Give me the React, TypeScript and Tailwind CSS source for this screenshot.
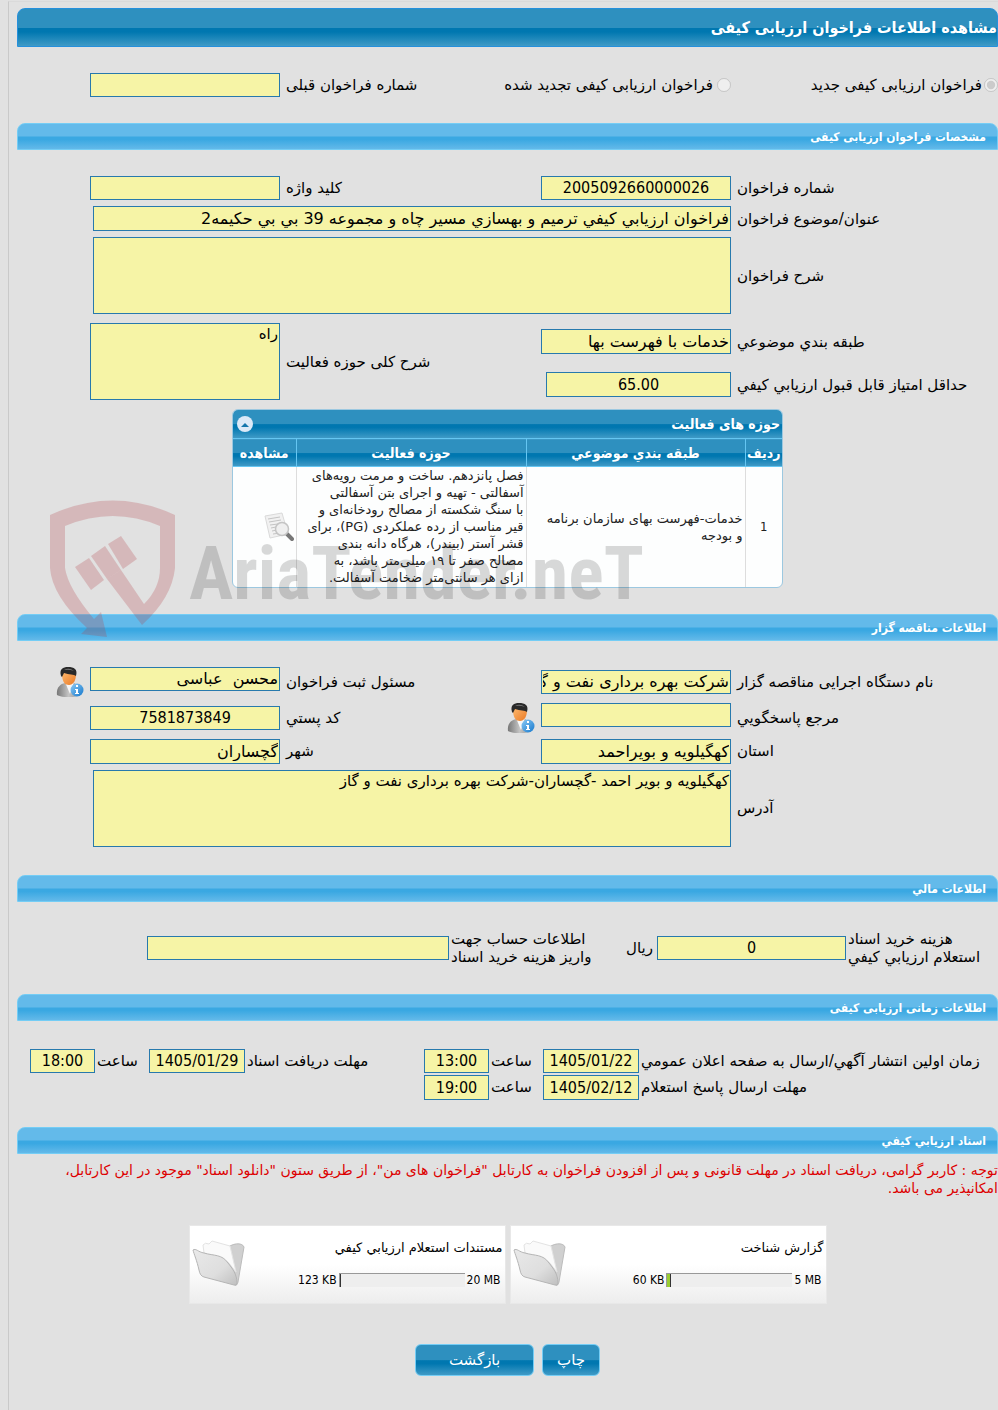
import { useId } from 'react';
import type { ReactNode } from 'react';
import clsx from 'clsx';

const CONDENSED = "font-['DejaVu_Sans_Condensed','DejaVu_Sans',sans-serif]";
const FIELD = 'block min-w-0 w-full border border-[#2779ad] bg-[#f6f4a6] px-px text-black outline-none';
const FORM_GRID = 'grid grid-cols-[261px_190px_1fr_190px_67px] gap-x-1.5 items-center';
const TIME_GRID = 'grid grid-cols-[357px_96px_50px_65px_1fr_96px_50px_65px_11px] gap-x-0.5 items-center';
const DARK_BAR = 'bg-[linear-gradient(to_bottom,#2e90bf_0%,#2e90bf_50%,#0077b0_52%,#0077b0_62%,#3f9ac6_100%)]';
const LIGHT_BAR = 'bg-[linear-gradient(to_bottom,#63baea_0%,#63baea_48%,#3aa8e2_52%,#3aa8e2_62%,#63b9e9_100%)]';

interface FieldProps {
  label: ReactNode;
  value?: string;
  center?: boolean;
  className?: string;
  icon?: boolean;
}

function Field({ label, value = '', center, className, icon }: FieldProps) {
  const id = useId();
  return (
    <>
      <div className="flex items-center justify-between">
        <span>{icon && <PersonIcon />}</span>
        <label htmlFor={id} className="text-left whitespace-nowrap">{label}</label>
      </div>
      <input
        id={id}
        readOnly
        value={value}
        className={clsx(FIELD, 'h-6 text-base', center ? ['text-center', CONDENSED] : 'text-right', className)}
      />
    </>
  );
}

function AreaField({ label, value = '', className }: FieldProps) {
  const id = useId();
  return (
    <>
      <label htmlFor={id} className="text-left">{label}</label>
      <textarea
        id={id}
        readOnly
        value={value}
        className={clsx(FIELD, 'h-[77px] resize-none leading-5', className)}
      />
    </>
  );
}

function SectionBar({ children }: { children: ReactNode }) {
  return (
    <h2 className={clsx('h-[27px] rounded-t-lg border border-[#74cdf5] pr-[11px] text-xs leading-[27px] font-bold text-white', CONDENSED, LIGHT_BAR)}>
      {children}
    </h2>
  );
}

function PersonIcon() {
  return (
    <svg width="28" height="30" viewBox="0 0 28 30" aria-hidden="true">
      <defs>
        <linearGradient id="suit" x1="0" y1="0" x2="1" y2="0">
          <stop offset="0" stopColor="#777" />
          <stop offset="0.5" stopColor="#c4c4c4" />
          <stop offset="1" stopColor="#909090" />
        </linearGradient>
        <linearGradient id="face" x1="0" y1="0" x2="1" y2="1">
          <stop offset="0" stopColor="#ffbb70" />
          <stop offset="1" stopColor="#e97925" />
        </linearGradient>
        <linearGradient id="info" x1="0" y1="0" x2="1" y2="1">
          <stop offset="0" stopColor="#8bcaf5" />
          <stop offset="1" stopColor="#1678cc" />
        </linearGradient>
      </defs>
      <path d="M1 28C0 21 4 17 9 16H18C23 18 25 22 24 28C18 31 7 31 1 28Z" fill="url(#suit)" />
      <path d="M9 15L14 27L18 15Z" fill="#f7f7f7" />
      <path d="M6 7C6 15 9 18 13 18C17 18 20 14 20 7L17 4H10Z" fill="url(#face)" />
      <path d="M5 9C3 2 7 0 12 0C18 0 22 2 20 9C18 7 13 8 8 6L6 10Z" fill="#292929" />
      <path d="M8 3Q13 0 18 4Q13 2 8 3Z" fill="#777" />
      <circle cx="21" cy="23" r="6.5" fill="url(#info)" />
      <path d="M19 22H22V26H23V27H19V26H20V23H19ZM20 18H22V20H20Z" fill="#fff" />
    </svg>
  );
}

function DocumentSearchIcon() {
  return (
    <svg width="30" height="30" viewBox="0 0 30 30" aria-hidden="true">
      <path d="M1 4L18 1L24 22L6 26Z" fill="#f1f1f1" stroke="#dadada" />
      <path d="M4 7L16 5M5 10L17 8M6 13L14 12M7 16L12 15M8 19L13 18M9 22L16 21" stroke="#c4c4c4" fill="none" />
      <path d="M23 22L28 27" stroke="#777" strokeWidth="4" strokeLinecap="round" />
      <circle cx="18" cy="17" r="6.5" fill="#efefef" stroke="#c4c4c4" strokeWidth="1.5" />
    </svg>
  );
}

function FolderIcon() {
  return (
    <svg width="54" height="50" viewBox="0 0 54 50" aria-hidden="true">
      <defs>
        <linearGradient id="folder-front" x1="0" y1="0" x2="1" y2="1">
          <stop offset="0" stopColor="#e9e9e9" />
          <stop offset="0.6" stopColor="#dedede" />
          <stop offset="1" stopColor="#bfbfbf" />
        </linearGradient>
      </defs>
      <path d="M34 10C40 4 50 3 52 8L46 43C45 47 43 47 42 45Z" fill="#d0d0d0" stroke="#bcbcbc" />
      <path d="M11 6Q13 3 17 5L20 2L38 7L44 33L36 23L12 14Z" fill="#fafafa" stroke="#e3e3e3" />
      <path d="M1 11C4 9 6 13 12 14C22 17 30 15 36 24C40 29 45 35 45 44Q45 47 42 46L12 38Q8 37 7 31C5 22 2 15 1 11Z" fill="url(#folder-front)" stroke="#b5b5b5" />
    </svg>
  );
}

function Watermark() {
  return (
    <div dir="ltr" className="pointer-events-none absolute top-[500px] left-[50px] flex items-start gap-3" aria-hidden="true">
      <svg width="127" height="138" viewBox="50 500 127 138" fill="#b44048" fillOpacity="0.25">
        <path d="M50 515Q113 486 175 515V568Q172 598 142 625L107 579L121 570L144 604Q160 588 160 568V526Q113 506 65 526V568Q68 588 94 619L101 612L107 637L81 634L87 628Q52 596 50 568Z" />
        <path d="M75 567L89 558L104 580L91 590Z" />
        <path d="M91 556L105 546L121 570L107 579Z" />
        <path d="M108 544L121 536L137 559L123 569Z" />
      </svg>
      <span className="pt-6 font-['Liberation_Sans_Narrow','Roboto_Condensed','Liberation_Sans',sans-serif] text-[74px] leading-[100px] font-bold text-black/15">
        AriaTender.neT
      </span>
    </div>
  );
}

const files = [
  { name: 'گزارش شناخت', limit: '5 MB', size: '60 KB', percent: 3 },
  { name: 'مستندات استعلام ارزيابي کيفي', limit: '20 MB', size: '123 KB', percent: 1 },
];

function FileCard({ name, limit, size, percent }: (typeof files)[number]) {
  return (
    <div className="flex h-[79px] w-[317px] items-center justify-between border border-[#e8e8e8] bg-linear-to-b from-white from-50% to-[#ededed] px-0.5">
      <div className="flex flex-1 flex-col gap-4">
        <a href="#file" className="text-[13px] leading-4 text-black">{name}</a>
        <div className={clsx('flex items-center gap-0.5 text-xs leading-4', CONDENSED)}>
          <span dir="ltr" className="pr-0.5">{limit}</span>
          <div className="flex h-3.5 w-[126px] justify-end border-t border-l border-[#999] bg-[#eee]">
            <div className="border-r border-[#333] bg-[#9acd32]" style={{ width: `${percent}%` }} />
          </div>
          <span dir="ltr">{size}</span>
        </div>
      </div>
      <FolderIcon />
    </div>
  );
}

export default function App() {
  return (
    <div dir="rtl" className="relative min-h-screen overflow-hidden bg-[#e1e1e1] pt-px pl-2 font-['DejaVu_Sans',sans-serif] text-[15px] leading-[18px] text-black">
      <main className="border-t border-l border-t-[#dadada] border-l-[#c9c9c9] pt-1.5 pb-9 pl-2">
        <h1 className={clsx('h-[39px] rounded-t-lg border border-[#2590dc] text-base leading-[37px] font-bold text-white', CONDENSED, DARK_BAR)}>
          مشاهده اطلاعات فراخوان ارزیابی کیفی
        </h1>

        <div className={clsx(FORM_GRID, 'py-[26px]')}>
          <label className="flex items-center gap-0.5">
            <input type="radio" name="kind" disabled defaultChecked className="size-3.5" />
            فراخوان ارزیابی کیفی جدید
          </label>
          <div className="col-span-2 flex items-center justify-between">
            <label className="flex items-center gap-1">
              <input type="radio" name="kind" disabled className="size-3.5" />
              فراخوان ارزیابی کیفی تجدید شده
            </label>
            <label htmlFor="previous">شماره فراخوان قبلی</label>
          </div>
          <input id="previous" readOnly className={clsx(FIELD, 'h-6')} />
        </div>

        <SectionBar>مشخصات فراخوان ارزیابی کیفی</SectionBar>
        <div className="flex flex-col gap-1.5 pt-[26px]">
          <div className={FORM_GRID}>
            <Field label="شماره فراخوان" value="2005092660000026" center />
            <Field label="کلید واژه" />
          </div>
          <div className={FORM_GRID}>
            <Field label="عنوان/موضوع فراخوان" value="فراخوان ارزيابي کيفي ترميم و بهسازي مسير چاه و مجموعه 39 بي بي حکيمه2" className="col-span-3 h-[25px] w-[calc(100%-3px)]!" />
          </div>
          <div className={FORM_GRID}>
            <AreaField label="شرح فراخوان" className="col-span-3 w-[calc(100%-3px)]!" />
          </div>
        </div>
        <div className="grid grid-cols-[457px_1fr] gap-x-1.5 pt-[9px]">
          <div className="grid grid-cols-[261px_190px] grid-rows-[37px_49px] items-center gap-x-1.5">
            <Field label="طبقه بندي موضوعي" value="خدمات با فهرست بها" className="h-[25px]" />
            <Field label="حداقل امتياز قابل قبول ارزيابي کيفي" value="65.00" center className="h-[25px] w-[185px]!" />
          </div>
          <div className="grid grid-cols-[1fr_190px_67px] items-center gap-x-1.5 self-start">
            <AreaField label="شرح کلی حوزه فعالیت" value="راه" />
          </div>
        </div>

        <div className="mx-auto w-[551px] overflow-hidden rounded-md border border-[#9cc8e0] bg-[#fdfefe]">
          <div className={clsx('flex h-7 items-center justify-between pr-0.5 pl-1 text-sm font-bold text-white', CONDENSED, DARK_BAR)}>
            <h3>حوزه های فعالیت</h3>
            <button type="button" aria-label="بستن" className="flex size-4 items-center justify-center rounded-full bg-[#dce9f7]">
              <svg width="8" height="5" viewBox="0 0 8 5"><path d="M0 5L4 1L8 5Z" fill="#1476ad" /></svg>
            </button>
          </div>
          <table className="w-full table-fixed border-collapse text-[13px] leading-[17px] text-[#222]">
            <thead>
              <tr className={clsx('h-7 border-y border-[#65c6f2] text-sm text-white', CONDENSED, DARK_BAR)}>
                <th className="w-[37px]">ردیف</th>
                <th className="w-[219px] border-r border-[#65c6f2]">طبقه بندي موضوعي</th>
                <th className="border-r border-[#65c6f2]">حوزه فعالیت</th>
                <th className="w-[63px] border-r border-[#65c6f2]">مشاهده</th>
              </tr>
            </thead>
            <tbody>
              <tr className="h-[120px]">
                <td className={clsx('text-center', CONDENSED)}>1</td>
                <td className="border-r border-[#ddd] px-0.5">خدمات-فهرست بهای سازمان برنامه<br />و بودجه</td>
                <td className="border-r border-[#ddd] px-0.5 whitespace-nowrap">
                  فصل پانزدهم. ساخت و مرمت رویه‌های<br />
                  آسفالتی - تهیه و اجرای بتن آسفالتی<br />
                  با سنگ شکسته از مصالح رودخانه‌ای و<br />
                  قیر مناسب از رده عملکردی (PG)، برای<br />
                  قشر آستر (بیندر)، هرگاه دانه بندی<br />
                  مصالح صفر تا ۱۹ میلی‌متر باشد، به<br />
                  ازای هر سانتی‌متر ضخامت آسفالت.
                </td>
                <td className="border-r border-[#ddd] pr-0.5">
                  <button type="button" aria-label="مشاهده" className="block"><DocumentSearchIcon /></button>
                </td>
              </tr>
            </tbody>
          </table>
        </div>

        <div className="pt-[26px]">
          <SectionBar>اطلاعات مناقصه گزار</SectionBar>
        </div>
        <div className="flex flex-col gap-1.5 pt-[26px] pb-7">
          <div className={FORM_GRID}>
            <Field label="نام دستگاه اجرایی مناقصه گزار" value="شرکت بهره برداری نفت و گاز گچساران" />
            <Field label="مسئول ثبت فراخوان" value="محسن  عباسی" className="self-start" />
            <button type="button" aria-label="مسئول ثبت فراخوان"><PersonIcon /></button>
          </div>
          <div className={FORM_GRID}>
            <Field label="مرجع پاسخگويي" className="self-start" />
            <Field label="کد پستي" value="7581873849" center icon />
          </div>
          <div className={FORM_GRID}>
            <Field label="استان" value="کهگیلویه و بویراحمد" className="h-[25px]" />
            <Field label="شهر" value="گچساران" className="h-[25px]" />
          </div>
          <div className={FORM_GRID}>
            <AreaField label="آدرس" value="کهگیلویه و بویر احمد -گچساران-شرکت بهره برداری نفت و گاز" className="col-span-3 w-[calc(100%-3px)]!" />
          </div>
        </div>

        <SectionBar>اطلاعات مالي</SectionBar>
        <div className="flex items-center gap-0.5 py-7">
          <label htmlFor="cost" className="w-[150px] shrink-0 text-left whitespace-nowrap">
            هزینه خرید اسناد<br />استعلام ارزيابي کيفي
          </label>
          <input id="cost" readOnly value="0" className={clsx(FIELD, 'h-6 max-w-[189px] text-center text-base', CONDENSED)} />
          <span className="px-0.5">ریال</span>
          <label htmlFor="account" className="flex-1 text-left whitespace-nowrap">
            اطلاعات حساب جهت<br />واریز هزینه خرید اسناد
          </label>
          <input id="account" readOnly className={clsx(FIELD, 'ml-[130px] h-6 max-w-[302px]')} />
        </div>

        <SectionBar>اطلاعات زمانی ارزیابی کیفی</SectionBar>
        <div className="flex flex-col gap-0.5 pt-7 pb-[27px]">
          <div className={TIME_GRID}>
            <Field label="زمان اولين انتشار آگهي/ارسال به صفحه اعلان عمومي" value="1405/01/22" center />
            <Field label="ساعت" value="13:00" center />
            <Field label="مهلت دریافت اسناد" value="1405/01/29" center />
            <Field label="ساعت" value="18:00" center />
          </div>
          <div className={TIME_GRID}>
            <Field label="مهلت ارسال پاسخ استعلام" value="1405/02/12" center className="h-[25px]" />
            <Field label="ساعت" value="19:00" center className="h-[25px]" />
          </div>
        </div>

        <SectionBar>اسناد ارزيابي کيفي</SectionBar>
        <p className="pt-[7px] text-sm leading-[18px] text-[#dd0000]">
          توجه : کاربر گرامی، دریافت اسناد در مهلت قانونی و پس از افزودن فراخوان به کارتابل "فراخوان های من"، از طریق ستون "دانلود اسناد" موجود در این کارتابل،{' '}
          <span className="inline-block">امکانپذیر می باشد.</span>
        </p>

        <div className="flex justify-center gap-1 pt-7">
          {files.map((file) => (
            <FileCard key={file.name} {...file} />
          ))}
        </div>

        <div className="flex justify-center gap-2 pt-10">
          <button type="button" className={clsx('h-8 w-[58px] rounded-md border border-[#74cdf5] text-white', DARK_BAR)}>چاپ</button>
          <button type="button" className={clsx('h-8 w-[119px] rounded-md border border-[#74cdf5] text-white', DARK_BAR)}>بازگشت</button>
        </div>
      </main>
      <Watermark />
    </div>
  );
}
